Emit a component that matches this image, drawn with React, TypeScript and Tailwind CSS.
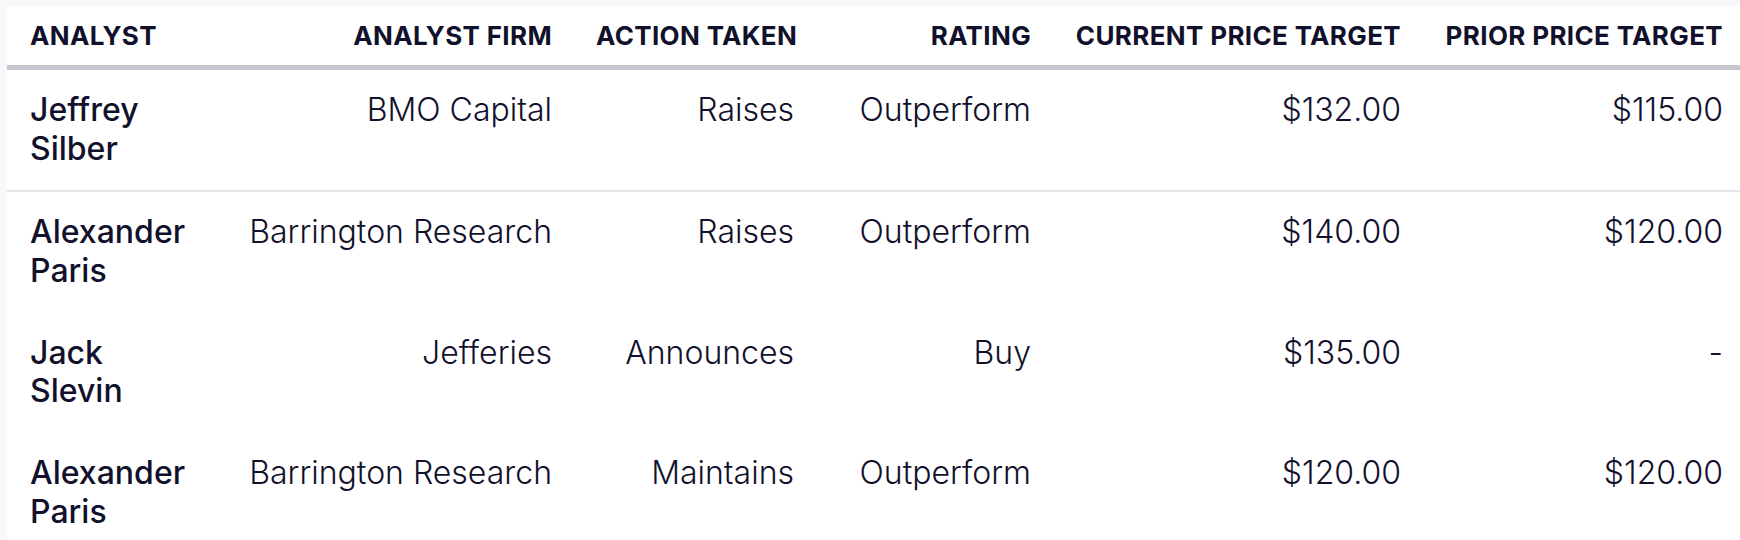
const headers = [
  { label: 'ANALYST', align: 'text-left' },
  { label: 'ANALYST FIRM', align: 'text-right' },
  { label: 'ACTION TAKEN', align: 'text-right' },
  { label: 'RATING', align: 'text-right' },
  { label: 'CURRENT PRICE TARGET', align: 'text-right' },
  { label: 'PRIOR PRICE TARGET', align: 'text-right' },
];

const rows = [
  ['Jeffrey Silber', 'BMO Capital', 'Raises', 'Outperform', '$132.00', '$115.00'],
  ['Alexander Paris', 'Barrington Research', 'Raises', 'Outperform', '$140.00', '$120.00'],
  ['Jack Slevin', 'Jefferies', 'Announces', 'Buy', '$135.00', '-'],
  ['Alexander Paris', 'Barrington Research', 'Maintains', 'Outperform', '$120.00', '$120.00'],
];

const pad = ['pl-[23px] pr-[22px]', 'px-[22px]', 'px-[22px]', 'px-[22px]', 'px-[22px]', 'pl-[22px] pr-[17px]'];

const App = () => {
  return (
    <div
      className="w-[1740px] h-[540px] overflow-hidden bg-[#f7f8fa] pt-[6px] pl-[7px] text-[#11112c]"
      style={{ fontFamily: 'Inter, "Noto Sans", sans-serif' }}
    >
      <table className="w-[1733px] table-fixed border-separate border-spacing-0 bg-white">
        <colgroup>
          <col className="w-[200px]" />
          <col className="w-[367px]" />
          <col className="w-[242px]" />
          <col className="w-[237px]" />
          <col className="w-[370px]" />
          <col className="w-[317px]" />
        </colgroup>
        <thead>
          <tr>
            {headers.map((h, i) => (
              <th
                key={h.label}
                className={`${h.align} ${pad[i]} pt-[14px] pb-[14px] border-b-[5px] border-[#c6c6d0] align-middle text-[26px] leading-[31px] font-bold whitespace-nowrap tracking-[0.35px]`}
              >
                {h.label}
              </th>
            ))}
          </tr>
        </thead>
        <tbody>
          {rows.map((row, r) => (
            <tr key={r}>
              {row.map((cell, c) => (
                <td
                  key={c}
                  className={`${pad[c]} pt-[21px] align-top text-[32px] leading-[38.5px] ${
                    r === 0 ? 'pb-[22px] border-b-2 border-[#e5e5ea]' : 'pb-[22.5px]'
                  } ${c === 0 ? 'text-left font-medium' : 'text-right font-light whitespace-nowrap'}`}
                >
                  {cell}
                </td>
              ))}
            </tr>
          ))}
        </tbody>
      </table>
    </div>
  );
};

export default App;
